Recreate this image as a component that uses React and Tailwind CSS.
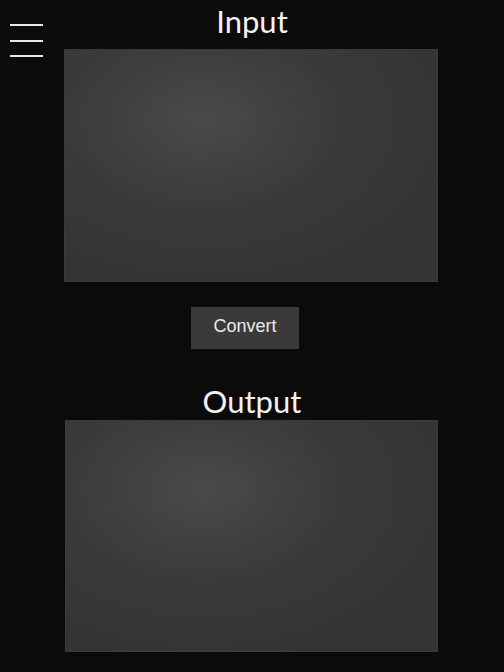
import React from 'react';

const Panel = ({ className = '' }) => (
  <div
    className={`bg-[radial-gradient(ellipse_70%_75%_at_37%_30%,#4a4a4a_0%,#3b3b3b_50%,#343434_100%)] border border-[#3b3b3b] ${className}`}
  />
);

const App = () => {
  return (
    <div className="relative min-h-[672px] bg-[#0b0b0b] flex flex-col items-center font-['Lato','Open_Sans',sans-serif] text-white">
      {/* menu button */}
      <button className="absolute left-[10px] top-[24px] flex flex-col gap-[13.5px]">
        <span className="block w-[33px] h-[2px] bg-[#e8e8e8]" />
        <span className="block w-[33px] h-[2px] bg-[#e8e8e8]" />
        <span className="block w-[33px] h-[2px] bg-[#e8e8e8]" />
      </button>

      <h1 className="h-[49px] pt-[1px] text-[31px] leading-[40px] text-[#f2f2f2]">Input</h1>
      <Panel className="w-[374px] h-[233px] mr-[2px]" />

      <button className="mt-[25px] w-[108px] h-[42px] mr-[14px] bg-[#3a3a3a] text-[#ececec] text-[18px] font-['Liberation_Sans',Arial,sans-serif] leading-none pb-[4px]">
        Convert
      </button>

      <h2 className="mt-[35px] h-[36px] text-[31px] leading-[40px] -translate-y-[3px] text-[#f2f2f2]">Output</h2>
      <Panel className="w-[373px] h-[232px] mr-[1px]" />
    </div>
  );
};

export default App;
